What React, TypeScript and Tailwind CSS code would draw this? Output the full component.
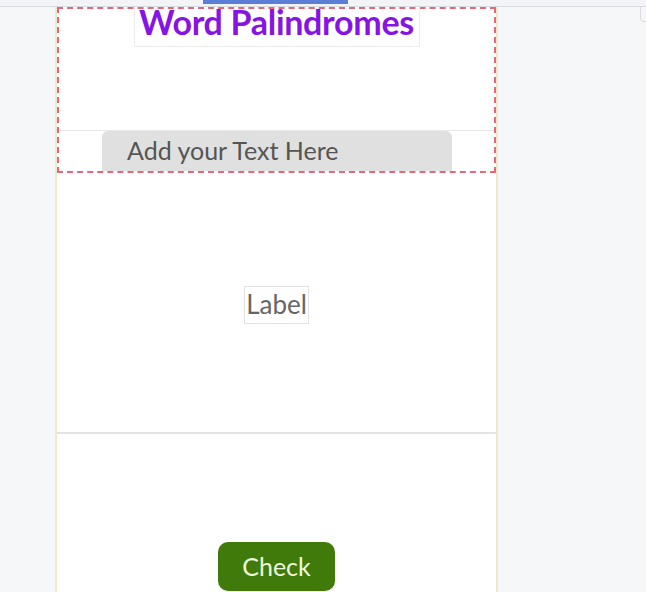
const App = () => {
  return (
    <div
      className="relative h-[592px] w-[646px] overflow-hidden bg-[#f6f7f9]"
      style={{ fontFamily: "Lato, 'Open Sans', sans-serif" }}
    >
      {/* top strip */}
      <div className="h-[7px] border-b border-[#d9dbe0] bg-[#f3f4f7]">
        <div className="ml-[203px] h-[4px] w-[145px] bg-[#5b7fd6]" />
      </div>
      <div className="absolute right-[-6px] top-[6px] h-[16px] w-[12px] rounded-bl-[4px] border border-[#d9dbe0] bg-[#f6f7f9]" />

      {/* phone column */}
      <div className="ml-[55px] flex h-[585px] w-[443px] flex-col border-x-2 border-[#f2e9cb] bg-white">
        <div className="flex h-[166px] flex-col border-2 border-dashed border-[#e4677a]">
          <div className="flex h-[122px] justify-center border-b border-[#e8e8e8]">
            <div className="mt-[-2px] flex h-[40px] w-[286px] items-start justify-center border border-t-0 border-[#ececec]">
              <span className="mt-[-5px] whitespace-nowrap text-[34px] font-bold leading-[40px] tracking-[-0.3px] text-[#8614e4]">
                Word Palindromes
              </span>
            </div>
          </div>
          <div className="flex flex-1 items-start pl-[43px]">
            <div className="flex h-[40px] w-[350px] items-center rounded-t-[6px] bg-[#e0e0e0] pl-[25px] text-[25px] text-[#555555]">
              Add your Text Here
            </div>
          </div>
        </div>

        <div className="flex h-[261px] items-center justify-center border-b-2 border-[#e4e4e4]">
          <div className="mt-[4px] flex h-[38px] items-center border border-[#e2e2e2] px-[1px] text-[26px] text-[#666666]">
            Label
          </div>
        </div>

        <div className="flex flex-1 items-end justify-center">
          <button
            type="button"
            className="mb-[1px] flex h-[49px] w-[117px] items-center justify-center rounded-[10px] bg-[#3f7a0b] text-[25px] text-[#eef8dc]"
          >
            Check
          </button>
        </div>
      </div>
    </div>
  );
};

export default App;
